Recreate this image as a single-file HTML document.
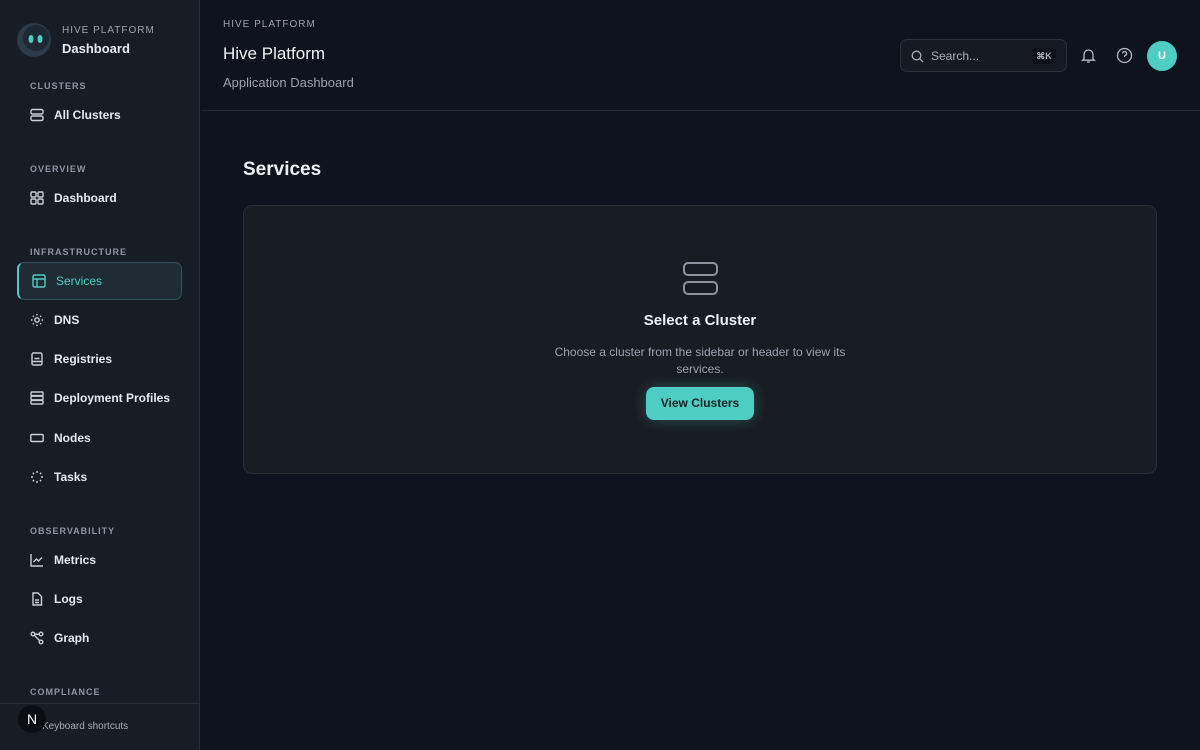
<!DOCTYPE html>
<html><head><meta charset="utf-8"><style>
*{box-sizing:border-box;margin:0;padding:0}
body{width:1200px;height:750px;overflow:hidden;background:#0e131d;font-family:"Liberation Sans",sans-serif;color:#e8ebef;position:relative}
.sb{position:absolute;left:0;top:0;width:200px;height:750px;background:#181c24;border-right:1px solid #262b34}
.sec{position:absolute;left:30px;font-size:9px;letter-spacing:1px;color:#8d96a3;font-weight:bold}
.it{position:absolute;left:30px;font-size:12px;font-weight:bold;color:#e6e9ee;display:flex;align-items:center;gap:10px}
.it svg{width:14px;height:14px;stroke:#c9cfd7;fill:none;stroke-width:1.4}
.main{position:absolute;left:201px;top:0;right:0;bottom:0}
.hdr{height:111px;border-bottom:1px solid #232936;position:relative}
</style></head><body>
<div class="sb">
 <svg style="position:absolute;left:16px;top:22px" width="36" height="36" viewBox="0 0 36 36"><circle cx="18" cy="18" r="17" fill="#2d3a48"/><circle cx="20" cy="16" r="13" fill="#1e2833"/><ellipse cx="15" cy="17" rx="2.5" ry="4" fill="#4ecdc4"/><ellipse cx="24" cy="17" rx="2.5" ry="4" fill="#4ecdc4"/></svg>
 <div style="position:absolute;left:62px;top:25px;font-size:10px;letter-spacing:1px;color:#9aa3ae">HIVE PLATFORM</div>
 <div style="position:absolute;left:62px;top:41px;font-size:13px;font-weight:bold">Dashboard</div>
 <div class="sec" style="top:81px">CLUSTERS</div>
 <div class="it" style="top:108px"><svg viewBox="0 0 14 14"><rect x="1" y="1.5" width="12" height="4.5" rx="1.5"/><rect x="1" y="8" width="12" height="4.5" rx="1.5"/></svg>All Clusters</div>
 <div class="sec" style="top:164px">OVERVIEW</div>
 <div class="it" style="top:191px"><svg viewBox="0 0 14 14"><rect x="1" y="1" width="5" height="5" rx="1"/><rect x="8" y="1" width="5" height="5" rx="1"/><rect x="1" y="8" width="5" height="5" rx="1"/><rect x="8" y="8" width="5" height="5" rx="1"/></svg>Dashboard</div>
 <div class="sec" style="top:247px">INFRASTRUCTURE</div>
 <div style="position:absolute;left:17px;top:262px;width:165px;height:38px;border:1px solid #35515a;border-left:2px solid #4ecdc4;border-radius:7px;background:#1f2c33"></div>
 <div class="it" style="top:274px;left:32px;color:#4ecdc4;font-weight:normal"><svg viewBox="0 0 14 14" style="stroke:#4ecdc4"><rect x="1" y="1" width="12" height="12" rx="1.5"/><path d="M1 5h12M5 5v8"/></svg>Services</div>
 <div class="it" style="top:313px"><svg viewBox="0 0 14 14"><circle cx="7" cy="7" r="2.2"/><path d="M7 1v1.5M7 11.5V13M1 7h1.5M11.5 7H13M2.8 2.8l1 1M10.2 10.2l1 1M2.8 11.2l1-1M10.2 3.8l1-1"/></svg>DNS</div>
 <div class="it" style="top:352px"><svg viewBox="0 0 14 14"><rect x="2" y="1" width="10" height="12" rx="1.5"/><path d="M4.5 6.5h5M2 9.5h10"/></svg>Registries</div>
 <div class="it" style="top:391px"><svg viewBox="0 0 14 14"><rect x="1" y="1" width="12" height="3.6" rx="1"/><rect x="1" y="5.2" width="12" height="3.6" rx="1"/><rect x="1" y="9.4" width="12" height="3.6" rx="1"/></svg>Deployment Profiles</div>
 <div class="it" style="top:431px"><svg viewBox="0 0 14 14"><rect x="0.8" y="3.5" width="12.4" height="7" rx="1.2"/></svg>Nodes</div>
 <div class="it" style="top:470px"><svg viewBox="0 0 14 14"><path d="M7 1v2M7 11v2M1 7h2M11 7h2M2.8 2.8l1.3 1.3M9.9 9.9l1.3 1.3M2.8 11.2l1.3-1.3M9.9 4.1l1.3-1.3"/></svg>Tasks</div>
 <div class="sec" style="top:526px">OBSERVABILITY</div>
 <div class="it" style="top:553px"><svg viewBox="0 0 14 14"><path d="M1 1v12h12M3.5 9l3-3 2 2 3.5-3.5"/></svg>Metrics</div>
 <div class="it" style="top:592px"><svg viewBox="0 0 14 14"><path d="M3 1h5l3.5 3.5V13H3z"/><path d="M5 8h4M5 10.5h4"/></svg>Logs</div>
 <div class="it" style="top:631px"><svg viewBox="0 0 14 14"><circle cx="3" cy="3" r="1.8"/><circle cx="11" cy="3" r="1.8"/><circle cx="11" cy="11" r="1.8"/><path d="M4.5 4.5l5 5M9.5 3.5L4.8 3"/></svg>Graph</div>
 <div class="sec" style="top:687px">COMPLIANCE</div>
 <div style="position:absolute;left:0;top:703px;width:200px;border-top:1px solid #2a2f38"></div>
 <div style="position:absolute;left:42px;top:721px;font-size:10px;color:#a7afb9">Keyboard shortcuts</div>
 <div style="position:absolute;left:18px;top:705px;width:28px;height:28px;border-radius:50%;background:#0b0d12;color:#fff;font-size:14px;text-align:center;line-height:28px">N</div>
</div>
<div class="main">
 <div class="hdr">
  <div style="position:absolute;left:22px;top:19px;font-size:10px;letter-spacing:1px;color:#9aa3ae">HIVE PLATFORM</div>
  <div style="position:absolute;left:22px;top:44px;font-size:17px;color:#f0f2f5">Hive Platform</div>
  <div style="position:absolute;left:22px;top:75px;font-size:13px;color:#9aa3ae">Application Dashboard</div>
  <div style="position:absolute;left:699px;top:39px;width:167px;height:33px;border:1px solid #2a303a;border-radius:7px;background:#161b23">
   <svg style="position:absolute;left:10px;top:10px" width="13" height="13" viewBox="0 0 13 13" fill="none" stroke="#a6aeb8" stroke-width="1.3"><circle cx="5.5" cy="5.5" r="4.3"/><path d="M8.7 8.7L12 12"/></svg>
   <span style="position:absolute;left:30px;top:9px;font-size:12px;color:#a6aeb8">Search...</span>
   <span style="position:absolute;left:131px;top:8px;width:24px;height:16px;background:#0d1119;border-radius:3px;font-size:9px;color:#a6aeb8;text-align:center;line-height:16px;font-weight:bold">⌘K</span>
  </div>
  <svg style="position:absolute;left:879px;top:47px" width="17" height="17" viewBox="0 0 17 17" fill="none" stroke="#b3bac3" stroke-width="1.3"><path d="M4 12V7.5a4.5 4.5 0 0 1 9 0V12l1.3 1.2H2.7z"/><path d="M7 15h3"/></svg>
  <svg style="position:absolute;left:915px;top:47px" width="17" height="17" viewBox="0 0 17 17" fill="none" stroke="#b3bac3" stroke-width="1.3"><circle cx="8.5" cy="8.5" r="7"/><path d="M6.6 6.5a2 2 0 1 1 2.6 1.9c-.5.2-.7.6-.7 1.1v.5M8.5 12.2v.2"/></svg>
  <div style="position:absolute;left:946px;top:41px;width:30px;height:30px;border-radius:50%;background:#4ecdc4;color:#fff;font-size:11px;font-weight:bold;text-align:center;line-height:30px">U</div>
 </div>
 <div style="position:absolute;left:42px;top:159px;font-size:19px;font-weight:bold;color:#eef1f4">Services</div>
 <div style="position:absolute;left:42px;top:205px;width:914px;height:269px;background:#181c23;border:1px solid #2a2f38;border-radius:9px">
  <svg style="position:absolute;left:438px;top:55px" width="37" height="37" viewBox="0 0 37 37" fill="none" stroke="#8c939c" stroke-width="2"><rect x="2" y="2" width="33" height="12" rx="4"/><rect x="2" y="21" width="33" height="12" rx="4"/></svg>
  <div style="position:absolute;left:0;width:100%;top:106px;text-align:center;font-size:15px;font-weight:bold;color:#eef1f4">Select a Cluster</div>
  <div style="position:absolute;left:300px;width:312px;top:138px;text-align:center;font-size:12px;line-height:17px;color:#9aa3ae">Choose a cluster from the sidebar or header to view its services.</div>
  <div style="position:absolute;left:402px;top:181px;width:108px;height:33px;background:#4ecdc4;border-radius:8px;box-shadow:0 0 14px rgba(78,205,196,.3);color:#10231f;font-size:12px;font-weight:bold;text-align:center;line-height:33px">View Clusters</div>
 </div>
</div>
</body></html>
